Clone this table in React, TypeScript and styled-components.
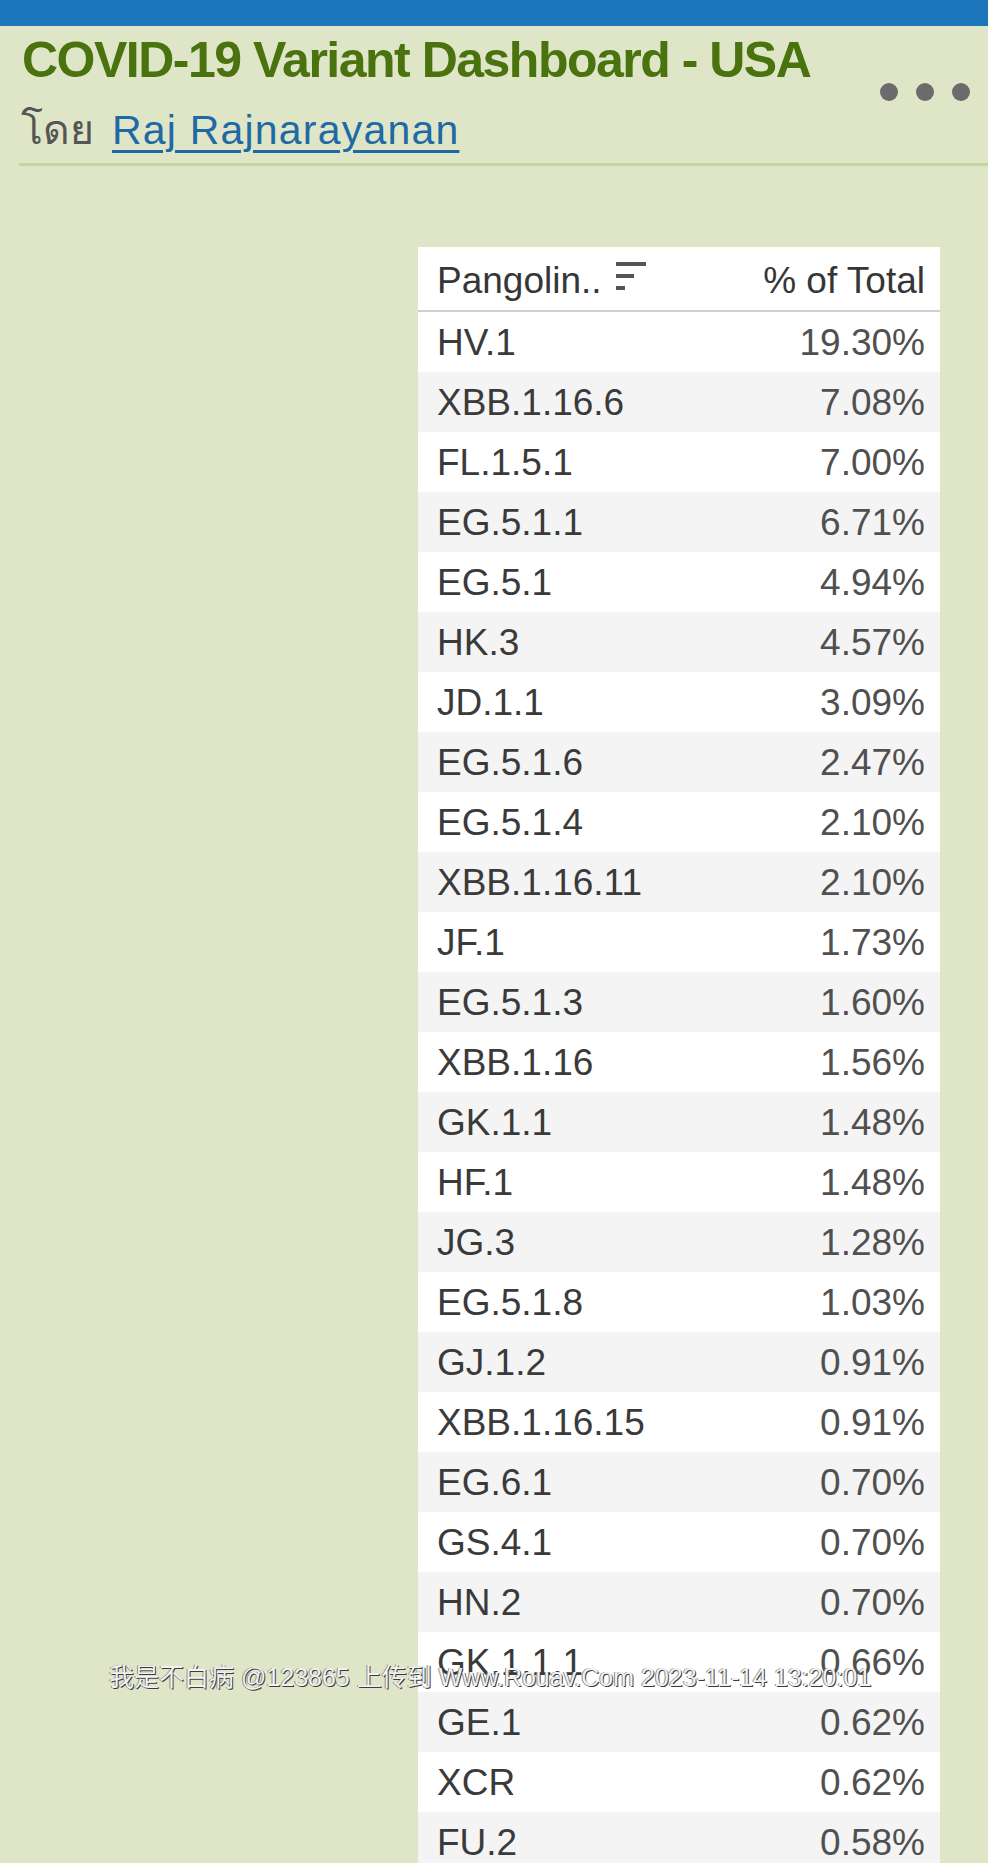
import styled, { createGlobalStyle } from "styled-components";

type Variant = {
  lineage: string;
  share: string;
};

const variants: Variant[] = [
  { lineage: "HV.1", share: "19.30%" },
  { lineage: "XBB.1.16.6", share: "7.08%" },
  { lineage: "FL.1.5.1", share: "7.00%" },
  { lineage: "EG.5.1.1", share: "6.71%" },
  { lineage: "EG.5.1", share: "4.94%" },
  { lineage: "HK.3", share: "4.57%" },
  { lineage: "JD.1.1", share: "3.09%" },
  { lineage: "EG.5.1.6", share: "2.47%" },
  { lineage: "EG.5.1.4", share: "2.10%" },
  { lineage: "XBB.1.16.11", share: "2.10%" },
  { lineage: "JF.1", share: "1.73%" },
  { lineage: "EG.5.1.3", share: "1.60%" },
  { lineage: "XBB.1.16", share: "1.56%" },
  { lineage: "GK.1.1", share: "1.48%" },
  { lineage: "HF.1", share: "1.48%" },
  { lineage: "JG.3", share: "1.28%" },
  { lineage: "EG.5.1.8", share: "1.03%" },
  { lineage: "GJ.1.2", share: "0.91%" },
  { lineage: "XBB.1.16.15", share: "0.91%" },
  { lineage: "EG.6.1", share: "0.70%" },
  { lineage: "GS.4.1", share: "0.70%" },
  { lineage: "HN.2", share: "0.70%" },
  { lineage: "GK.1.1.1", share: "0.66%" },
  { lineage: "GE.1", share: "0.62%" },
  { lineage: "XCR", share: "0.62%" },
  { lineage: "FU.2", share: "0.58%" },
];

const GlobalStyle = createGlobalStyle`
  *, *::before, *::after {
    box-sizing: border-box;
  }

  html,
  body {
    margin: 0;
    padding: 0;
    background: #dfe6c7;
  }

  body {
    font-family: "Liberation Sans", Arial, sans-serif;
  }
`;

const Page = styled.div`
  position: relative;
  min-height: 1863px;
  overflow: hidden;
  background: #dfe6c7;
`;

const TopBar = styled.div`
  height: 26px;
  background: #1c75ba;
`;

const Header = styled.header`
  display: flex;
  align-items: center;
  justify-content: space-between;
  margin-left: 19px;
  padding: 8px 18px 9px 2px;
  border-bottom: 3px solid #c3d7a1;
`;

const TitleBlock = styled.div`
  display: flex;
  flex-direction: column;
`;

const Title = styled.h1`
  margin: 0 0 0 1px;
  font-size: 50px;
  line-height: 52px;
  font-weight: 700;
  letter-spacing: -1.5px;
  color: #4a720e;
  white-space: nowrap;
`;

const Byline = styled.div`
  display: flex;
  align-items: baseline;
  gap: 18px;
  margin-top: 20px;
  font-size: 41px;
  line-height: 48px;
`;

const ByWord = styled.span`
  color: #555;
`;

const AuthorLink = styled.a`
  color: #1f6aa5;
  letter-spacing: 1.2px;
  text-decoration: underline;
  text-decoration-thickness: 3px;
  text-underline-offset: 6px;
`;

const MoreMenu = styled.div`
  display: flex;
  gap: 18px;
  margin-top: -4px;
`;

const Dot = styled.span`
  width: 18px;
  height: 18px;
  border-radius: 50%;
  background: #6b6b6b;
`;

const Body = styled.main`
  display: flex;
  justify-content: flex-end;
  padding: 81px 48px 0 0;
`;

const Table = styled.div`
  width: 522px;
  background: #fff;
  font-size: 37px;
  line-height: 1;
`;

const HeadRow = styled.div`
  display: flex;
  align-items: center;
  justify-content: space-between;
  height: 65px;
  padding: 3px 15px 0 19px;
  border-bottom: 2px solid #cfcfcf;
  color: #363636;
`;

const HeadLabel = styled.div`
  display: flex;
  align-items: center;
  gap: 13px;
`;

const SortIcon = styled.svg`
  margin-bottom: 8px;
`;

const Row = styled.div<{ $striped: boolean }>`
  display: flex;
  align-items: center;
  justify-content: space-between;
  height: 60px;
  padding: 0 15px 0 19px;
  background: ${({ $striped }) => ($striped ? "#f4f4f4" : "#fff")};
`;

const Lineage = styled.span`
  color: #3a3a3a;
`;

const Share = styled.span`
  color: #505050;
`;

const Watermark = styled.div`
  position: absolute;
  top: 1662px;
  left: 109px;
  font-family: "Liberation Sans", "Noto Sans CJK SC", sans-serif;
  font-size: 25px;
  line-height: 30px;
  white-space: nowrap;
  color: #f2f2f2;
  text-shadow:
    1px 1px 0 #3c3c3c,
    -1px 0 0 #8a8a8a;
  pointer-events: none;
`;

export default function App() {
  return (
    <Page>
      <GlobalStyle />
      <TopBar />

      <Header>
        <TitleBlock>
          <Title>COVID-19 Variant Dashboard - USA</Title>
          <Byline>
            <ByWord>โดย</ByWord>
            <AuthorLink href="#">Raj Rajnarayanan</AuthorLink>
          </Byline>
        </TitleBlock>

        <MoreMenu>
          <Dot />
          <Dot />
          <Dot />
        </MoreMenu>
      </Header>

      <Body>
        <Table>
          <HeadRow>
            <HeadLabel>
              Pangolin..
              <SortIcon width="32" height="28" viewBox="0 0 32 28">
                <rect x="1" y="0" width="30" height="4" fill="#555" />
                <rect x="1" y="12" width="18" height="4" fill="#555" />
                <rect x="1" y="24" width="9" height="4" fill="#555" />
              </SortIcon>
            </HeadLabel>
            <span>% of Total</span>
          </HeadRow>

          {variants.map((v, i) => (
            <Row key={v.lineage} $striped={i % 2 === 1}>
              <Lineage>{v.lineage}</Lineage>
              <Share>{v.share}</Share>
            </Row>
          ))}
        </Table>
      </Body>

      <Watermark>我是不白病 @123865 上传到 Www.Rouav.Com 2023-11-14 13:20:01</Watermark>
    </Page>
  );
}
